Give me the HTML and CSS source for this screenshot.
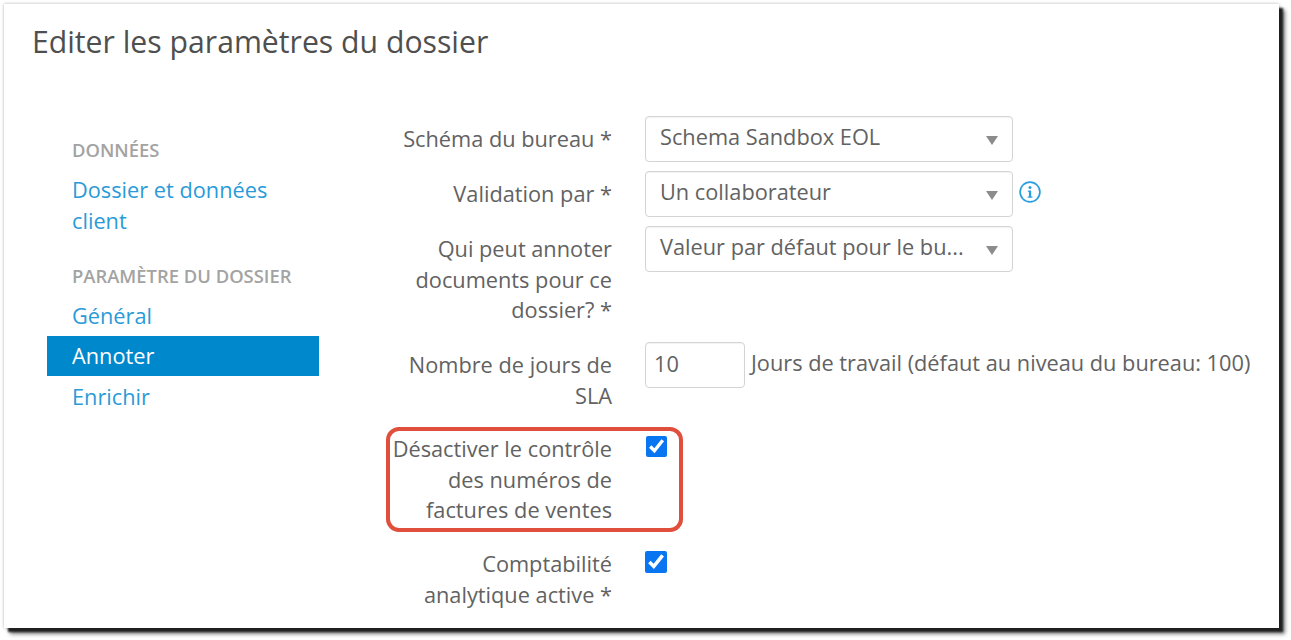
FILE: index.html
```html
<!DOCTYPE html>
<html lang="fr">
<head>
    <meta charset="UTF-8">
    <title>Editer les paramètres du dossier</title>
    <link rel="stylesheet" href="styles.css">
</head>
<body>
    <div class="panel">
        <h1 class="title">Editer les paramètres du dossier</h1>

        <div class="content">
            <div class="side">
                <div class="side-head">DONNÉES</div>
                <a class="side-link">Dossier et données client</a>
                <div class="side-head side-head-2">PARAMÈTRE DU DOSSIER</div>
                <a class="side-link">Général</a>
                <a class="side-link active">Annoter</a>
                <a class="side-link">Enrichir</a>
            </div>

            <div class="form">
                <div class="row row-select">
                    <label class="lbl">Schéma du bureau *</label>
                    <div class="select"><span class="select-text">Schema Sandbox EOL</span><i class="caret"></i></div>
                </div>
                <div class="row row-select">
                    <label class="lbl">Validation par *</label>
                    <div class="select"><span class="select-text">Un collaborateur</span><i class="caret"></i></div>
                    <svg class="info" width="22" height="22" viewBox="0 0 22 22">
                        <circle cx="11" cy="11" r="9.9" fill="none" stroke="#2a9fe0" stroke-width="1.7"/>
                        <circle cx="11" cy="6.6" r="1.5" fill="#2a9fe0"/>
                        <path d="M8.8 9.4h3.4v6h1.2v1.4H8.7v-1.4h1.2v-4.6H8.8z" fill="#2a9fe0"/>
                    </svg>
                </div>
                <div class="row row-long">
                    <label class="lbl">Qui peut annoter documents pour ce dossier? *</label>
                    <div class="select"><span class="select-text">Valeur par défaut pour le bu...</span><i class="caret"></i></div>
                </div>
                <div class="row row-sla">
                    <label class="lbl">Nombre de jours de SLA</label>
                    <input class="num" type="text" value="10">
                    <span class="unit">Jours de travail (défaut au niveau du bureau: 100)</span>
                </div>
                <div class="row row-mark">
                    <label class="lbl">Désactiver le contrôle des numéros de factures de ventes</label>
                    <input class="chk" type="checkbox" checked>
                </div>
                <div class="row row-last">
                    <label class="lbl">Comptabilité analytique active *</label>
                    <input class="chk" type="checkbox" checked>
                </div>
            </div>
        </div>
    </div>
</body>
</html>
```

FILE: styles.css
```css
html, body {
    height: 100%;
}

body {
    margin: 0;
    background: #fff;
    font-family: "Open Sans", Arial, sans-serif;
    font-size: 21.75px;
    line-height: 30.5px;
    color: #626262;
    overflow: hidden;
}

.panel {
    box-sizing: border-box;
    width: 1275px;
    height: 624px;
    margin: 4px 0 0 4px;
    background: #fff;
    box-shadow: 4px 4px 2px #1f1f1f, 6px 6px 4px rgba(0, 0, 0, 0.5), 0 0 3px rgba(0, 0, 0, 0.3);
    overflow: hidden;
}

.title {
    margin: 0;
    padding: 16px 0 0 28px;
    font-size: 30.2px;
    font-weight: 400;
    line-height: 44px;
    color: #4f4f4f;
}

.content {
    display: flex;
    padding-top: 52px;
}

/* menu gauche */
.side {
    width: 272px;
    margin-left: 43px;
    padding-top: 19px;
}

.side-head {
    margin-bottom: 5px;
    padding-left: 25px;
    font-size: 18.4px;
    font-weight: 600;
    line-height: 30px;
    color: #a3a3a3;
}

.side-head-2 {
    margin-top: 20px;
}

.side-link {
    display: block;
    padding: 5px 25px;
    color: #2a9bd8;
    line-height: 30.5px;
}

.active {
    margin-top: -1px;
    margin-bottom: 1px;
    background: #0088cc;
    color: #fff;
}

/* formulaire */
.form {
    margin-left: 68px;
}

.row {
    display: flex;
    align-items: flex-start;
}

.lbl {
    box-sizing: border-box;
    width: 225px;
    padding-top: 8px;
    text-align: right;
}

.select,
.num {
    box-sizing: border-box;
    height: 46px;
    margin-left: 33px;
    border: 1px solid #d4d4d4;
    border-radius: 4px;
    background: #fff;
    box-shadow: inset 0 1px 1px rgba(0, 0, 0, 0.05);
    color: #626262;
    font-family: inherit;
    font-size: 21.75px;
}

.select {
    display: flex;
    align-items: center;
    width: 368px;
    padding: 0 14px;
}

.select-text {
    flex: 1;
    min-width: 0;
    margin-top: -3px;
    white-space: nowrap;
}

.caret {
    flex: none;
    width: 0;
    height: 0;
    margin: 2px 0 0 19px;
    border-left: 6px solid transparent;
    border-right: 6px solid transparent;
    border-top: 9px solid #8c8c8c;
}

.info {
    margin: 10px 0 0 6px;
}

.row-select {
    margin-bottom: 9px;
}

.row-long {
    height: 116px;
}

.row-sla {
    height: 85px;
}

.num {
    width: 100px;
    padding: 0 8px 3px;
    outline: none;
}

.unit {
    margin-left: 6px;
    padding-top: 6px;
    white-space: nowrap;
}

.chk {
    width: 21px;
    height: 21px;
    margin: 0 0 0 34px;
    accent-color: #0a75f0;
}

.row-mark {
    box-sizing: border-box;
    width: 297px;
    height: 105px;
    margin-left: -1px;
    padding-top: 3px;
    border: 4px solid #e04f3b;
    border-radius: 13px;
}

.row-mark .lbl {
    width: 222px;
    padding-top: 0;
}

.row-mark .chk {
    margin-top: 2px;
}

.row-last {
    margin-top: 17px;
}

.row-last .lbl {
    padding-top: 0;
}

.row-last .chk {
    width: 22px;
    height: 22px;
    margin: 2px 0 0 33px;
}
```
